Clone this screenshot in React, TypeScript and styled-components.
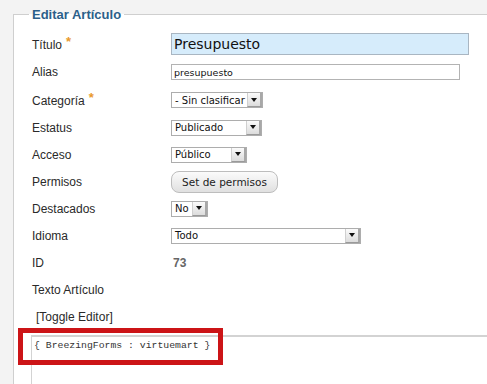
import React from "react";
import styled, { createGlobalStyle } from "styled-components";

const Global = createGlobalStyle`
  html, body { margin: 0; padding: 0; overflow: hidden; background: #f3f3f3; }
  body { width: 487px; height: 384px; }
`;

const Page = styled.div`
  padding: 7px 0 0 13px;
  height: 384px;
  box-sizing: border-box;
  position: relative;
  font-family: "Liberation Sans", Arial, sans-serif;
`;

const Fieldset = styled.fieldset`
  margin: 0 -40px 0 0;
  padding: 0 0 60px 18px;
  border: 1px solid #cfcfcf;
  background: #fff;
  min-height: 420px;
`;

const Legend = styled.legend`
  padding: 0 3px;
  margin-left: -3px;
  font: bold 13px/15px "Liberation Sans", Arial, sans-serif;
  color: #2b5f8a;
`;

const Rows = styled.div`
  display: flex;
  flex-direction: column;
  margin-top: 8px;
`;

const Row = styled.div<{ $h: number }>`
  display: grid;
  grid-template-columns: 139px 1fr;
  align-items: center;
  height: ${(p) => p.$h}px;
`;

const Label = styled.div`
  font-size: 12px;
  color: #2a2a2a;
`;

const Star = styled.span`
  color: #e9992c;
  font-size: 13px;
  font-weight: bold;
  margin-left: 4px;
  position: relative;
  top: -3px;
`;

const Cell = styled.div`
  display: flex;
  align-items: center;
`;

const TitleInput = styled.div`
  box-sizing: border-box;
  width: 298px;
  height: 22px;
  border: 1px solid #a9b6c2;
  background: #d6ecfb;
  font: 14px "DejaVu Sans", sans-serif;
  color: #111;
  padding-left: 2px;
  display: flex;
  align-items: center;
`;

const TextInput = styled.div`
  box-sizing: border-box;
  width: 289px;
  height: 16px;
  border: 1px solid #b3b3b3;
  background: #fff;
  font: 9.5px "DejaVu Sans", sans-serif;
  color: #111;
  padding-left: 2px;
  display: flex;
  align-items: center;
`;

const SelectBox = styled.div<{ $w: number }>`
  box-sizing: border-box;
  width: ${(p) => p.$w}px;
  height: 16px;
  border: 1px solid #adadad;
  background: #fff;
  display: flex;
  align-items: stretch;
  font: 10px "DejaVu Sans", sans-serif;
  color: #111;
`;

const SelectText = styled.span`
  flex: 1;
  padding-left: 3px;
  display: flex;
  align-items: center;
  white-space: nowrap;
  overflow: hidden;
`;

const Arrow = styled.span`
  width: 12px;
  background: linear-gradient(#fbfbfb, #dcdcdc);
  border-left: 1px solid #d0d0d0;
  border-right: 2px solid #a8a8a8;
  border-bottom: 1px solid #9a9a9a;
  display: flex;
  align-items: center;
  justify-content: center;
  &::after {
    content: "";
    border-left: 3px solid transparent;
    border-right: 3px solid transparent;
    border-top: 4px solid #111;
  }
`;

const Button = styled.div`
  box-sizing: border-box;
  width: 107px;
  height: 22px;
  border: 1px solid #bdbdbd;
  border-radius: 8px;
  background: linear-gradient(#fbfbfb, #e0e0e0);
  font: 10.5px "DejaVu Sans", sans-serif;
  color: #222;
  display: flex;
  align-items: center;
  justify-content: center;
`;

const IdValue = styled.span`
  font: bold 12px "Liberation Sans", Arial, sans-serif;
  color: #666;
  padding-left: 2px;
`;

const Toggle = styled.div`
  font-size: 12px;
  color: #2a2a2a;
  padding-left: 4px;
  height: 27px;
  display: flex;
  align-items: center;
`;

const Editor = styled.div`
  margin: 5px 0 0 -1px;
  border-top: 2px solid #d3d3d3;
  border-left: 1px solid #d3d3d3;
  height: 80px;
  padding: 3px 0 0 2px;
  font: 9.8px "Liberation Mono", "Courier New", monospace;
  color: #333;
`;

const Highlight = styled.div`
  position: absolute;
  left: 18px;
  top: 328px;
  width: 205px;
  height: 37px;
  box-sizing: border-box;
  border: 5px solid #cc1417;
  pointer-events: none;
`;

function Select({ w, children }: { w: number; children: React.ReactNode }) {
  return (
    <SelectBox $w={w}>
      <SelectText>{children}</SelectText>
      <Arrow />
    </SelectBox>
  );
}

export default function App() {
  return (
    <>
      <Global />
      <Page>
        <Fieldset>
          <Legend>Editar Artículo</Legend>
          <Rows>
            <Row $h={28}>
              <Label>
                Título<Star>*</Star>
              </Label>
              <Cell>
                <TitleInput>Presupuesto</TitleInput>
              </Cell>
            </Row>
            <Row $h={28}>
              <Label>Alias</Label>
              <Cell>
                <TextInput>presupuesto</TextInput>
              </Cell>
            </Row>
            <Row $h={28}>
              <Label>
                Categoría<Star>*</Star>
              </Label>
              <Cell>
                <Select w={92}>- Sin clasificar</Select>
              </Cell>
            </Row>
            <Row $h={27}>
              <Label>Estatus</Label>
              <Cell>
                <Select w={91}>Publicado</Select>
              </Cell>
            </Row>
            <Row $h={27}>
              <Label>Acceso</Label>
              <Cell>
                <Select w={76}>Público</Select>
              </Cell>
            </Row>
            <Row $h={27}>
              <Label>Permisos</Label>
              <Cell>
                <Button>Set de permisos</Button>
              </Cell>
            </Row>
            <Row $h={27}>
              <Label>Destacados</Label>
              <Cell>
                <Select w={37}>No</Select>
              </Cell>
            </Row>
            <Row $h={27}>
              <Label>Idioma</Label>
              <Cell>
                <Select w={190}>Todo</Select>
              </Cell>
            </Row>
            <Row $h={27}>
              <Label>ID</Label>
              <Cell>
                <IdValue>73</IdValue>
              </Cell>
            </Row>
            <Row $h={27}>
              <Label>Texto Artículo</Label>
              <Cell />
            </Row>
            <Toggle>[Toggle Editor]</Toggle>
            <Editor>{"{ BreezingForms : virtuemart }"}</Editor>
          </Rows>
        </Fieldset>
        <Highlight />
      </Page>
    </>
  );
}
